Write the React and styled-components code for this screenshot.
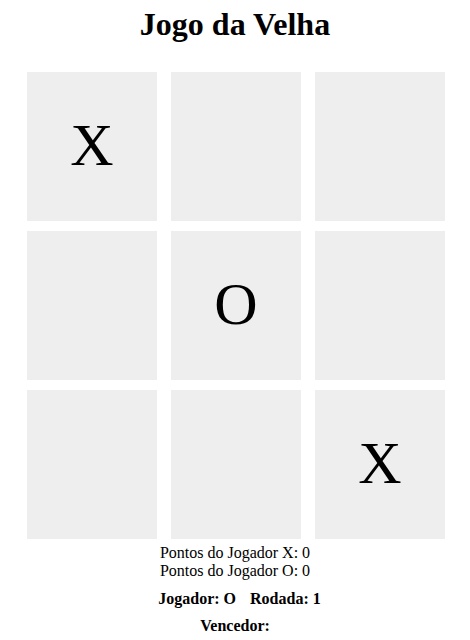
import React from "react";
import styled, { createGlobalStyle } from "styled-components";

const Global = createGlobalStyle`
    body {
        margin: 0;
        background: #ffffff;
        font-family: "Liberation Serif", "Times New Roman", serif;
        color: #000000;
    }
`

const Page = styled.div`
    display: flex;
    flex-direction: column;
    align-items: center;
    padding-top: 6px;
`

const Title = styled.h1`
    font-size: 32px;
    font-weight: bold;
    margin: 0 0 29px 0;
    line-height: 37px;
`

const Board = styled.div`
    display: grid;
    grid-template-columns: repeat(3, 130px);
    grid-auto-rows: 149px;
    column-gap: 14px;
    row-gap: 10px;
    margin-left: 2px;
`

const Cell = styled.div`
    background-color: #eeeeee;
    display: flex;
    align-items: center;
    justify-content: center;
    font-size: 60px;
    line-height: 1;
    padding-bottom: 4px;
`

const Score = styled.div`
    font-size: 16px;
    line-height: 18px;
    text-align: center;
    margin-top: 5px;
`

const Status = styled.div`
    font-size: 16px;
    font-weight: bold;
    margin-top: 10px;
    margin-left: 9px;
    display: flex;
    gap: 14px;
`

const Winner = styled.div`
    font-size: 16px;
    font-weight: bold;
    margin-top: 9px;
`

const board = ["X", "", "", "", "O", "", "", "", "X"]

export default function App() {
    return <Page>
        <Global/>
        <Title>Jogo da Velha</Title>
        <Board>
            {board.map((o, i) => <Cell key={i}>{o}</Cell>)}
        </Board>
        <Score>
            <div>Pontos do Jogador X: 0</div>
            <div>Pontos do Jogador O: 0</div>
        </Score>
        <Status>
            <span>Jogador: O</span>
            <span>Rodada: 1</span>
        </Status>
        <Winner>Vencedor:</Winner>
    </Page>
}
